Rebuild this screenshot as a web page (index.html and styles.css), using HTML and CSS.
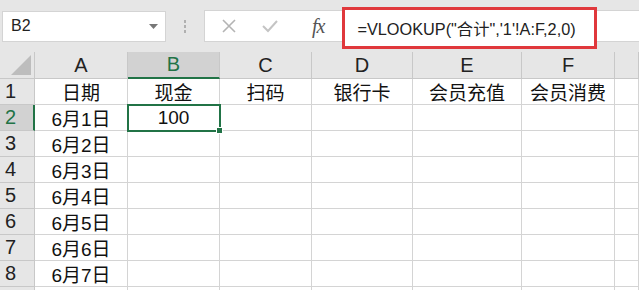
FILE: index.html
```html
<html>
<head>
    <title>Sheet</title>
    <link rel="stylesheet" href="styles.css">
</head>
<body>
    <div class="bar">
        <div class="namebox">
            <span>B2</span>
            <svg class="caret" width="9" height="5" viewBox="0 0 9 5"><path d="M0 0 H9 L4.5 5 Z" fill="#777"/></svg>
        </div>
        <div class="grip">
            <i></i><i></i><i></i>
        </div>
        <div class="fbox">
            <svg class="ico" width="16" height="16" viewBox="0 0 16 16"><path d="M2 2 L14 14 M14 2 L2 14" stroke="#b4b4b4" stroke-width="1.6" fill="none"/></svg>
            <svg class="ico" width="18" height="16" viewBox="0 0 18 16"><path d="M2 8 L7 13 L16 3" stroke="#c4c4c4" stroke-width="2" fill="none"/></svg>
            <span class="fx">fx</span>
            <div class="formula">=VLOOKUP("合计",'1'!A:F,2,0)</div>
        </div>
    </div>
    <div class="sheet">
        <div class="corner"><svg width="22" height="22" viewBox="0 0 22 22"><path d="M22 0 V22 H0 Z" fill="#bdbdbd"/></svg></div>
        <div class="ch">A</div>
        <div class="ch sel">B</div>
        <div class="ch">C</div>
        <div class="ch">D</div>
        <div class="ch">E</div>
        <div class="ch">F</div>
        <div class="ch"></div>

        <div class="rh">1</div>
        <div class="c">日期</div>
        <div class="c">现金</div>
        <div class="c">扫码</div>
        <div class="c">银行卡</div>
        <div class="c">会员充值</div>
        <div class="c">会员消费</div>
        <div class="c"></div>

        <div class="rh sel">2</div>
        <div class="c">6月1日</div>
        <div class="c active">100<i class="handle"></i></div>
        <div class="c"></div><div class="c"></div><div class="c"></div><div class="c"></div><div class="c"></div>

        <div class="rh">3</div>
        <div class="c">6月2日</div>
        <div class="c"></div><div class="c"></div><div class="c"></div><div class="c"></div><div class="c"></div><div class="c"></div>

        <div class="rh">4</div>
        <div class="c">6月3日</div>
        <div class="c"></div><div class="c"></div><div class="c"></div><div class="c"></div><div class="c"></div><div class="c"></div>

        <div class="rh">5</div>
        <div class="c">6月4日</div>
        <div class="c"></div><div class="c"></div><div class="c"></div><div class="c"></div><div class="c"></div><div class="c"></div>

        <div class="rh">6</div>
        <div class="c">6月5日</div>
        <div class="c"></div><div class="c"></div><div class="c"></div><div class="c"></div><div class="c"></div><div class="c"></div>

        <div class="rh">7</div>
        <div class="c">6月6日</div>
        <div class="c"></div><div class="c"></div><div class="c"></div><div class="c"></div><div class="c"></div><div class="c"></div>

        <div class="rh">8</div>
        <div class="c">6月7日</div>
        <div class="c"></div><div class="c"></div><div class="c"></div><div class="c"></div><div class="c"></div><div class="c"></div>

        <div class="rh"></div>
        <div class="c"></div>
        <div class="c"></div><div class="c"></div><div class="c"></div><div class="c"></div><div class="c"></div><div class="c"></div>
    </div>
</body>
</html>
```

FILE: styles.css
```css
body {
    margin: 0;
    padding: 0;
    background: #e6e6e6;
    font-family: "Liberation Sans", "Noto Sans CJK SC", sans-serif;
    overflow: hidden;
    width: 639px;
    height: 290px;
}
.bar {
    display: flex;
    align-items: center;
    height: 52px;
    padding-left: 2px;
}
.namebox {
    width: 164px;
    height: 31px;
    background: #fff;
    border: 1px solid #d4d4d4;
    display: flex;
    align-items: center;
    justify-content: space-between;
    padding: 0 7px 0 8px;
    box-sizing: border-box;
    font-size: 16px;
    color: #222;
}
.grip {
    width: 38px;
    display: flex;
    flex-direction: column;
    align-items: center;
    gap: 2px;
}
.grip i {
    width: 2px;
    height: 3px;
    background: #b0b0b0;
}
.fbox {
    flex: 1;
    height: 30px;
    background: #fff;
    border: 1px solid #d4d4d4;
    border-right: none;
    display: flex;
    align-items: center;
    padding-left: 16px;
    gap: 24px;
}
.ico {
    display: block;
}
.fx {
    font-family: "Liberation Serif", serif;
    font-style: italic;
    font-size: 20px;
    color: #555;
    margin-left: 9px;
    letter-spacing: -1px;
}
.formula {
    height: 36px;
    border: 3px solid #e0383c;
    width: 237px;
    margin-top: 4px;
    margin-left: -6px;
    display: flex;
    align-items: center;
    padding-left: 12px;
    font-size: 16.3px;
    color: #222;
    background: #fff;
}
.sheet {
    display: grid;
    grid-template-columns: 35px 93px 92px 92px 101px 109px 93px 24px;
    grid-template-rows: 27px repeat(9, 26px);
    background: #fff;
}
.corner {
    background: #e6e6e6;
    border-right: 1px solid #c8c8c8;
    border-bottom: 1px solid #c8c8c8;
    display: flex;
    align-items: flex-end;
    justify-content: flex-end;
    padding: 0 3px 3px 0;
}
.corner svg {
    width: 20px;
    height: 20px;
}
.ch {
    background: #e6e6e6;
    border-right: 1px solid #c8c8c8;
    border-bottom: 1px solid #c8c8c8;
    display: flex;
    align-items: center;
    justify-content: center;
    font-size: 20px;
    color: #222;
}
.ch.sel {
    background: #d2d2d2;
    color: #217346;
    border-bottom: 2px solid #217346;
}
.rh {
    background: #e6e6e6;
    border-right: 1px solid #c8c8c8;
    border-bottom: 1px solid #c8c8c8;
    display: flex;
    align-items: center;
    padding-left: 5px;
    font-size: 20px;
    color: #222;
}
.rh.sel {
    background: #d2d2d2;
    color: #217346;
    border-right: 2px solid #217346;
}
.c {
    border-right: 1px solid #d4d4d4;
    border-bottom: 1px solid #d4d4d4;
    display: flex;
    align-items: center;
    justify-content: center;
    font-size: 19px;
    color: #111;
    position: relative;
}
.c.active {
    outline: 2px solid #217346;
    outline-offset: -1px;
    z-index: 1;
}
.handle {
    position: absolute;
    right: -4px;
    bottom: -4px;
    width: 5px;
    height: 5px;
    background: #217346;
    border: 1px solid #fff;
}
```
